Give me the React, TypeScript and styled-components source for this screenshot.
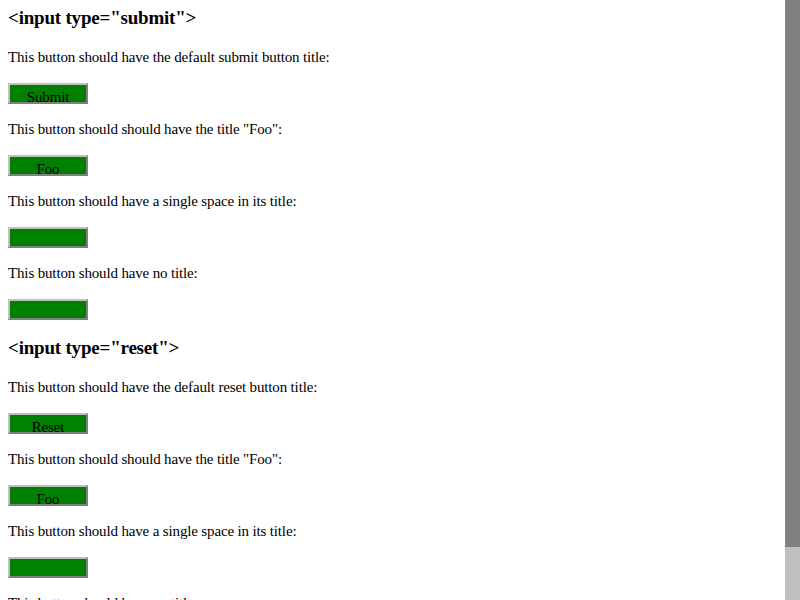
import React from "react";
import styled, { createGlobalStyle } from "styled-components";

const GlobalStyle = createGlobalStyle`
  html, body { background: #ffffff; overflow: hidden; }
  body {
    margin: 0;
    font-family: "Liberation Serif", "Times New Roman", serif;
    color: #000000;
  }
`;

const Viewport = styled.div`
  display: flex;
  height: 100vh;
  overflow: hidden;
`;

const Page = styled.main`
  flex: 1;
  min-width: 0;
  display: flex;
  flex-direction: column;
  gap: 18px;
  padding: 8px;
  overflow: hidden;
`;

const ScrollTrack = styled.div`
  flex: 0 0 15px;
  display: flex;
  flex-direction: column;
  background: #c0c0c0;
`;

const ScrollThumb = styled.div`
  flex: 0 0 547px;
  background: #808080;
`;

const Section = styled.section`
  display: flex;
  flex-direction: column;
`;

const Heading = styled.h2`
  margin: 0 0 20px;
  font-size: 19px;
  line-height: 20px;
  font-weight: 700;
  letter-spacing: -0.2px;
  white-space: nowrap;
`;

const CaseList = styled.div`
  display: flex;
  flex-direction: column;
  gap: 16px;
`;

const Case = styled.div`
  display: flex;
  flex-direction: column;
  align-items: flex-start;
  gap: 17px;
`;

const Text = styled.p`
  margin: 0;
  font-size: 15px;
  line-height: 18px;
  letter-spacing: -0.15px;
  white-space: nowrap;
`;

const GreenButton = styled.button`
  box-sizing: border-box;
  display: block;
  flex: 0 0 auto;
  width: 80px;
  height: 21px;
  margin: 0;
  padding: 8px 0 0;
  background: #008000;
  border-style: solid;
  border-width: 2px;
  border-color: #c0c0c0 #808080 #808080 #c0c0c0;
  border-radius: 0;
  color: #000000;
  font-family: "Liberation Serif", "Times New Roman", serif;
  font-size: 15px;
  line-height: 9px;
  letter-spacing: -0.15px;
  text-align: center;
  white-space: pre;
  overflow: visible;
`;

type CaseData = { text: string; value: string };

const sections: { title: string; type: "submit" | "reset"; cases: CaseData[] }[] = [
  {
    title: '<input type="submit">',
    type: "submit",
    cases: [
      { text: "This button should have the default submit button title:", value: "Submit" },
      { text: 'This button should should have the title "Foo":', value: "Foo" },
      { text: "This button should have a single space in its title:", value: " " },
      { text: "This button should have no title:", value: "" },
    ],
  },
  {
    title: '<input type="reset">',
    type: "reset",
    cases: [
      { text: "This button should have the default reset button title:", value: "Reset" },
      { text: 'This button should should have the title "Foo":', value: "Foo" },
      { text: "This button should have a single space in its title:", value: " " },
      { text: "This button should have no title:", value: "" },
    ],
  },
];

export default function App() {
  return (
    <>
      <GlobalStyle />
      <Viewport>
        <Page>
          {sections.map((s) => (
            <Section key={s.type}>
              <Heading>{s.title}</Heading>
              <CaseList>
                {s.cases.map((c, i) => (
                  <Case key={i}>
                    <Text>{c.text}</Text>
                    <GreenButton type="button">{c.value}</GreenButton>
                  </Case>
                ))}
              </CaseList>
            </Section>
          ))}
        </Page>
        <ScrollTrack aria-hidden="true">
          <ScrollThumb />
        </ScrollTrack>
      </Viewport>
    </>
  );
}
